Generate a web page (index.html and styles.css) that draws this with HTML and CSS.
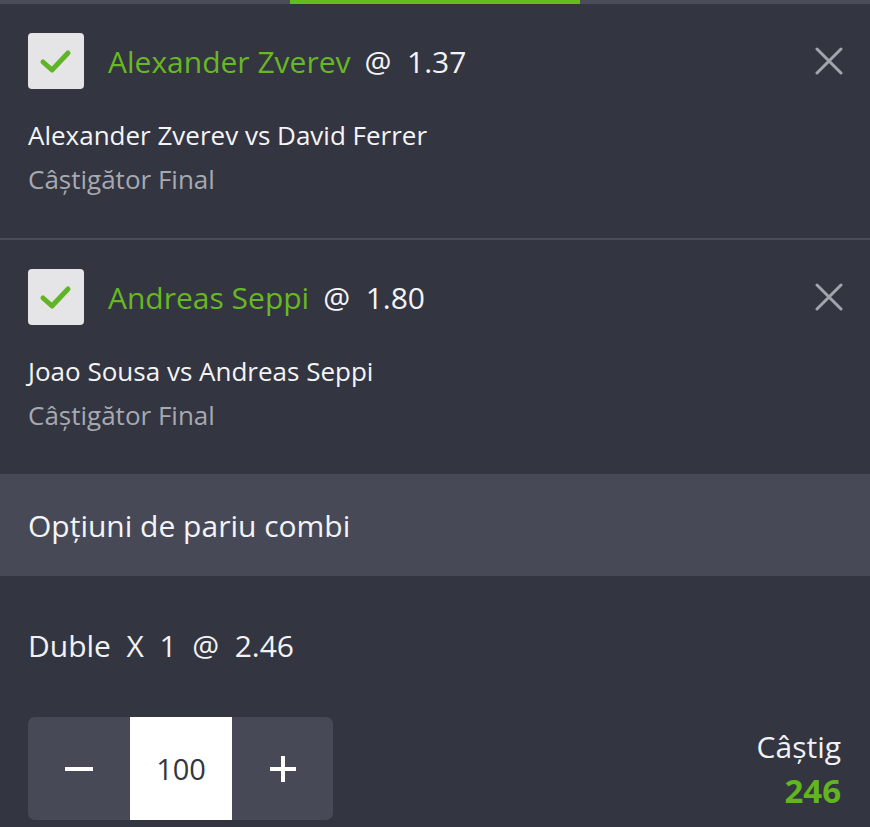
FILE: index.html
```html
<!DOCTYPE html>
<html lang="ro">
<head>
  <meta charset="UTF-8" />
  <meta name="viewport" content="width=device-width, initial-scale=1.0" />
  <title>Bilet</title>
  <link rel="stylesheet" href="styles.css">
</head>
<body>
  <div id="tabs">
    <div class="tab"></div>
    <div class="tab active"></div>
    <div class="tab"></div>
  </div>

  <div class="bet">
    <div class="bet-head">
      <span class="check">
        <svg viewBox="0 0 56 56" width="56" height="56"><path d="M15 29 L24 37 L40 20" fill="none" stroke="#5fb526" stroke-width="5" stroke-linecap="round" stroke-linejoin="round"/></svg>
      </span>
      <span class="pick">Alexander Zverev</span>
      <span class="odds">@&nbsp; 1.37</span>
      <button class="remove">
        <svg viewBox="0 0 28 28" width="28" height="28"><path d="M2 2 L26 26 M26 2 L2 26" stroke="#a3a5ad" stroke-width="3" stroke-linecap="round"/></svg>
      </button>
    </div>
    <div class="match">Alexander Zverev vs David Ferrer</div>
    <div class="market">Câştigător Final</div>
  </div>

  <div class="bet">
    <div class="bet-head">
      <span class="check">
        <svg viewBox="0 0 56 56" width="56" height="56"><path d="M15 29 L24 37 L40 20" fill="none" stroke="#5fb526" stroke-width="5" stroke-linecap="round" stroke-linejoin="round"/></svg>
      </span>
      <span class="pick">Andreas Seppi</span>
      <span class="odds">@&nbsp; 1.80</span>
      <button class="remove">
        <svg viewBox="0 0 28 28" width="28" height="28"><path d="M2 2 L26 26 M26 2 L2 26" stroke="#a3a5ad" stroke-width="3" stroke-linecap="round"/></svg>
      </button>
    </div>
    <div class="match">Joao Sousa vs Andreas Seppi</div>
    <div class="market">Câştigător Final</div>
  </div>

  <div id="combi-title">Opțiuni de pariu combi</div>

  <div id="combi">
    <div class="combi-line">Duble&nbsp; X&nbsp; 1&nbsp; @&nbsp; 2.46</div>
    <div class="stake-row">
      <div class="stepper">
        <button class="step">
          <svg viewBox="0 0 30 30" width="30" height="30"><path d="M1 15 H29" stroke="#fff" stroke-width="4"/></svg>
        </button>
        <div class="amount">100</div>
        <button class="step">
          <svg viewBox="0 0 30 30" width="30" height="30"><path d="M2 15 H28 M15 2 V28" stroke="#fff" stroke-width="4"/></svg>
        </button>
      </div>
      <div class="win">
        <div class="win-label">Câștig</div>
        <div class="win-value">246</div>
      </div>
    </div>
  </div>
</body>
</html>
```

FILE: styles.css
```css
body {
  margin: 0;
  padding: 0;
  background: #333541;
  color: #f2f2f4;
  font-family: "Open Sans", sans-serif;
  width: 870px;
  height: 827px;
  overflow: hidden;
}

#tabs {
  display: grid;
  grid-template-columns: 290px 290px 290px;
  height: 4px;
  background: #4a4c58;
}

#tabs .active {
  background: #66bb1e;
}

.bet {
  padding: 29px 28px 37px 28px;
  border-bottom: 2px solid #4b4e5a;
}

.bet + .bet {
  border-bottom: none;
}

.bet-head {
  display: flex;
  align-items: center;
  height: 56px;
}

.check {
  width: 56px;
  height: 56px;
  background: #e5e5e8;
  border-radius: 4px;
  display: flex;
  margin-right: 24px;
}

.pick {
  color: #67b822;
  font-size: 30px;
  margin-right: 14px;
}

.odds {
  font-size: 30px;
  color: #f4f4f6;
}

.remove {
  margin-left: auto;
  margin-right: -1px;
  background: none;
  border: none;
  padding: 0;
  display: flex;
  cursor: pointer;
}

.match {
  margin-top: 24px;
  font-size: 26px;
  line-height: 44px;
  color: #f4f4f6;
}

.market {
  font-size: 26px;
  line-height: 44px;
  color: #a7a9b1;
}

#combi-title {
  background: #474a56;
  height: 102px;
  display: flex;
  align-items: center;
  padding: 0 28px;
  font-size: 30px;
  color: #f4f4f6;
}

#combi {
  padding: 0 28px 0 28px;
}

.combi-line {
  margin-top: 48px;
  line-height: 44px;
  font-size: 30px;
}

.stake-row {
  margin-top: 49px;
  display: flex;
  justify-content: space-between;
  align-items: center;
}

.stepper {
  display: grid;
  grid-template-columns: 102px 102px 101px;
  height: 103px;
  background: #474a56;
  border-radius: 7px;
}

.step {
  background: none;
  border: none;
  display: flex;
  align-items: center;
  justify-content: center;
  cursor: pointer;
}

.amount {
  background: #ffffff;
  color: #33353f;
  font-size: 29px;
  display: flex;
  align-items: center;
  justify-content: center;
}

.win {
  text-align: right;
  margin-right: 1px;
}

.win-label {
  font-size: 30px;
  line-height: 44px;
}

.win-value {
  font-size: 33px;
  font-weight: bold;
  line-height: 44px;
  color: #62b51f;
}
```
